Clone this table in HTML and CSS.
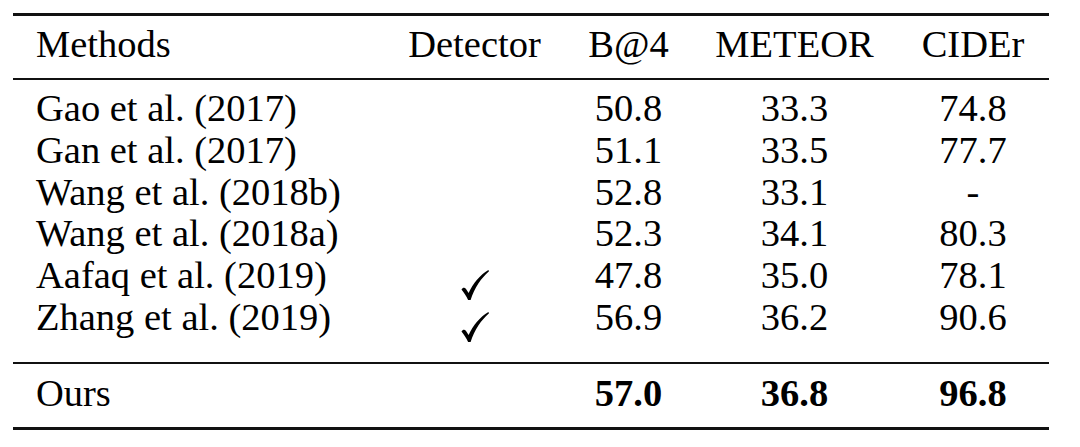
FILE: index.html
```html
<!DOCTYPE html>
<html lang="en">

<head>
    <meta charset="utf-8">
    <title>Results table</title>
    <link rel="stylesheet" href="styles.css">
</head>

<body>
    <div class="tabel">
        <table>
            <colgroup>
                <col class="c-metode">
                <col class="c-detektor">
                <col class="c-b4">
                <col class="c-meteor">
                <col class="c-cider">
            </colgroup>
            <thead>
                <tr>
                    <th class="navn">Methods</th>
                    <th>Detector</th>
                    <th>B@4</th>
                    <th>METEOR</th>
                    <th>CIDEr</th>
                </tr>
            </thead>
            <tbody class="andre">
                <tr class="forste">
                    <td class="navn">Gao et al. (2017)</td>
                    <td></td>
                    <td>50.8</td>
                    <td>33.3</td>
                    <td>74.8</td>
                </tr>
                <tr>
                    <td class="navn">Gan et al. (2017)</td>
                    <td></td>
                    <td>51.1</td>
                    <td>33.5</td>
                    <td>77.7</td>
                </tr>
                <tr>
                    <td class="navn">Wang et al. (2018b)</td>
                    <td></td>
                    <td>52.8</td>
                    <td>33.1</td>
                    <td>-</td>
                </tr>
                <tr>
                    <td class="navn">Wang et al. (2018a)</td>
                    <td></td>
                    <td>52.3</td>
                    <td>34.1</td>
                    <td>80.3</td>
                </tr>
                <tr>
                    <td class="navn">Aafaq et al. (2019)</td>
                    <td><svg class="flueben" viewBox="0 0 28 30" width="28" height="30"><path d="M0.5 19.5C1.8 17.4 3.6 17 5.2 19.2L7.6 23C12 13.2 19 5 27.4 0L28 1.3C20.2 8 13.6 18 9.6 30L7.1 30C5.2 26 3.1 22.6 0.5 19.5Z"/></svg></td>
                    <td>47.8</td>
                    <td>35.0</td>
                    <td>78.1</td>
                </tr>
                <tr class="sidste">
                    <td class="navn">Zhang et al. (2019)</td>
                    <td><svg class="flueben" viewBox="0 0 28 30" width="28" height="30"><path d="M0.5 19.5C1.8 17.4 3.6 17 5.2 19.2L7.6 23C12 13.2 19 5 27.4 0L28 1.3C20.2 8 13.6 18 9.6 30L7.1 30C5.2 26 3.1 22.6 0.5 19.5Z"/></svg></td>
                    <td>56.9</td>
                    <td>36.2</td>
                    <td>90.6</td>
                </tr>
            </tbody>
            <tbody class="vores">
                <tr>
                    <td class="navn">Ours</td>
                    <td></td>
                    <td><b>57.0</b></td>
                    <td><b>36.8</b></td>
                    <td><b>96.8</b></td>
                </tr>
            </tbody>
        </table>
    </div>
</body>

</html>
```

FILE: styles.css
```css
body {
    margin: 0;
    background-color: white;
    color: black;
    font-family: 'Liberation Serif', 'Times New Roman', serif;
}

.tabel {
    width: 1036px;
    margin: 13px 0 0 13px;
    border-top: 3px solid #111;
    border-bottom: 3px solid #111;
}

table {
    width: 1036px;
    table-layout: fixed;
    border-collapse: separate;
    border-spacing: 0;
    font-size: 38.5px;
    line-height: 41.7px;
}

.c-metode {
    width: 371px;
}

.c-detektor {
    width: 181px;
}

.c-b4 {
    width: 127px;
}

.c-meteor {
    width: 205px;
}

.c-cider {
    width: 152px;
}

th,
td {
    padding: 0;
    text-align: center;
    white-space: nowrap;
    font-weight: normal;
}

.navn {
    text-align: left;
    padding-left: 23px;
}

th {
    padding-top: 8px;
    padding-bottom: 12px;
    border-bottom: 2px solid #111;
}

.forste td {
    padding-top: 8.4px;
}

.sidste td {
    padding-bottom: 24px;
    border-bottom: 2px solid #111;
}

.vores td {
    padding-top: 9px;
    padding-bottom: 12.3px;
}

b {
    font-weight: bold;
}

/* flueben sidder lidt under grundlinjen, som i LaTeX */
.flueben {
    vertical-align: -4px;
    margin-bottom: -8px;
    fill: #000;
}
```
